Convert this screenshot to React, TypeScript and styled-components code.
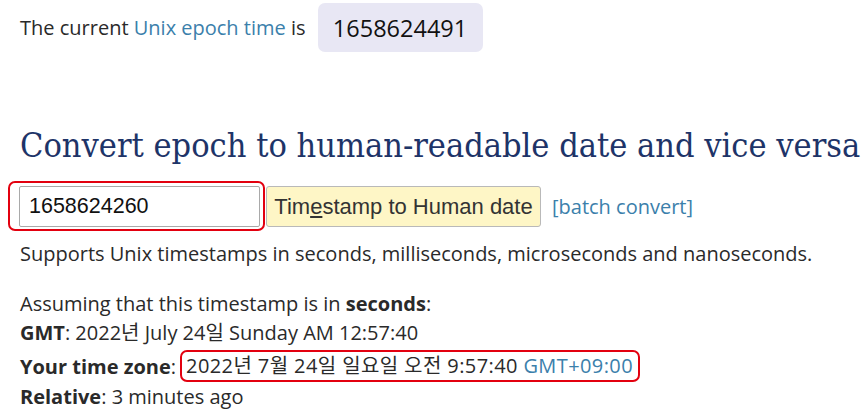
import React, { Fragment } from "react"
import styled, { createGlobalStyle } from "styled-components"

const GlobalStyle = createGlobalStyle`
  body {
    margin: 0;
    background: #fff;
    font-family: "Open Sans", "Noto Sans CJK KR", sans-serif;
    color: #2a2a2a;
  }
`

const Page = styled.main`
  padding: 3px 0 0 20px;
  width: 841px;
`

const CurrentRow = styled.div`
  display: flex;
  align-items: center;
  font-size: 20px;
  height: 49px;
`

const Link = styled.a`
  color: #3b80ab;
  text-decoration: none;
`

const EpochBadge = styled.span`
  display: inline-flex;
  align-items: center;
  justify-content: center;
  margin-left: 12px;
  width: 165px;
  height: 49px;
  border-radius: 7px;
  background: #e8e7f4;
  color: #111;
  font-size: 23.5px;
  font-weight: 500;
`

const Title = styled.h2`
  margin: 70px 0 0;
  font-family: "DejaVu Serif", "Liberation Serif", serif;
  font-stretch: condensed;
  font-weight: 400;
  font-size: 34px;
  line-height: 46px;
  color: #1e3468;
  white-space: nowrap;
`

const ConvertRow = styled.div`
  display: flex;
  align-items: center;
  margin: 13px 0 0 -12px;
`

const InputFrame = styled.span`
  display: inline-flex;
  align-items: center;
  border: 2px solid #e3000f;
  border-radius: 7px;
  padding: 3px 3px 2px 9px;
`

const TimestampInput = styled.input`
  box-sizing: border-box;
  width: 241px;
  height: 41px;
  padding: 0 9px;
  border: 1px solid #a9a9a9;
  border-radius: 2px;
  font-family: "Liberation Sans", Arial, sans-serif;
  font-size: 21.5px;
  color: #111;
`

const ConvertButton = styled.button`
  box-sizing: border-box;
  width: 275px;
  height: 41px;
  margin: 1px 0 0 1px;
  border: 1px solid #b9b9b9;
  border-radius: 3px;
  background: #fef6c6;
  font-family: "Liberation Sans", Arial, sans-serif;
  font-size: 22px;
  color: #333;
  padding: 0;
`

const BatchLink = styled(Link)`
  margin-left: 11px;
  font-size: 20px;
`

const Text = styled.p<{ $top?: number }>`
  margin: ${(p) => p.$top ?? 0}px 0 0;
  font-size: 20px;
  line-height: 29px;
  white-space: nowrap;
`

const ZoneLine = styled(Text)`
  display: flex;
  align-items: center;
  margin: 3px 0 0;
`

const ZoneBox = styled.span`
  display: inline-block;
  margin-left: 4px;
  padding: 0 5px 0 4px;
  line-height: 28px;
  letter-spacing: 0.4px;
  border: 2px solid #e3000f;
  border-radius: 7px;
`

export default function App(): JSX.Element {
  return (
    <Fragment>
      <GlobalStyle />
      <Page>
        <CurrentRow>
          The current&nbsp;<Link href="#">Unix epoch time</Link>&nbsp;is
          <EpochBadge>1658624491</EpochBadge>
        </CurrentRow>

        <Title>Convert epoch to human-readable date and vice versa</Title>

        <ConvertRow>
          <InputFrame>
            <TimestampInput defaultValue="1658624260" />
          </InputFrame>
          <ConvertButton>
            Tim<u>e</u>stamp to Human date
          </ConvertButton>
          <BatchLink href="#">[batch convert]</BatchLink>
        </ConvertRow>

        <Text $top={8}>Supports Unix timestamps in seconds, milliseconds, microseconds and nanoseconds.</Text>

        <Text $top={21}>
          Assuming that this timestamp is in <b>seconds</b>:
        </Text>
        <Text>
          <b>GMT</b>: 2022년 July 24일 Sunday AM 12:57:40
        </Text>
        <ZoneLine>
          <b>Your time zone</b>:
          <ZoneBox>
            2022년 7월 24일 일요일 오전 9:57:40&nbsp;<Link href="#">GMT+09:00</Link>
          </ZoneBox>
        </ZoneLine>
        <Text>
          <b>Relative</b>: 3 minutes ago
        </Text>
      </Page>
    </Fragment>
  )
}
